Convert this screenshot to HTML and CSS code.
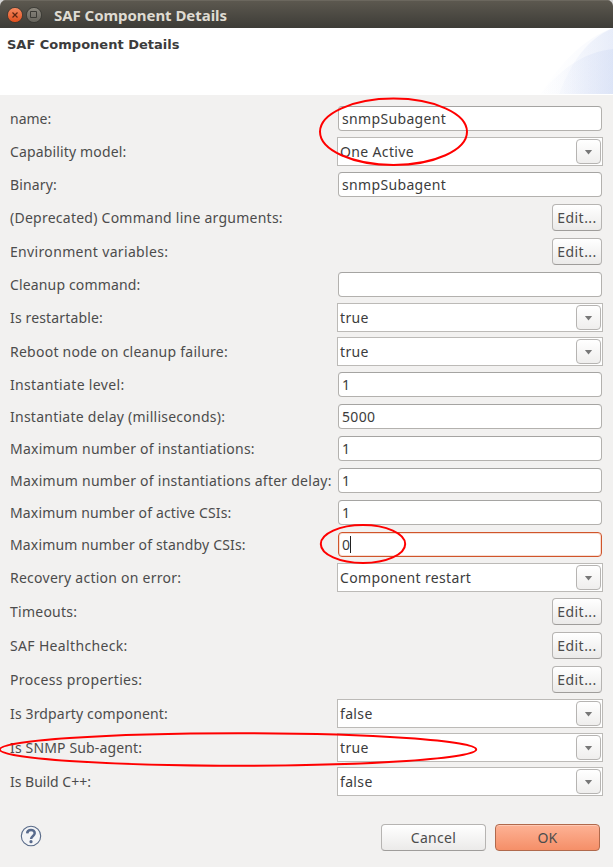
FILE: index.html
```
<!DOCTYPE html>
<html lang="en">
<head>
<meta charset="utf-8">
<title>SAF Component Details</title>
<link rel="stylesheet" href="styles.css">
</head>
<body>
<div class="window">
  <header class="titlebar">
    <svg class="control" viewBox="0 0 16 16"><defs><linearGradient id="close" x2="0" y2="1"><stop stop-color="#f68b62"/><stop offset="1" stop-color="#e04e1c"/></linearGradient></defs><circle cx="8" cy="8" r="7.6" fill="url(#close)" stroke="#34332e" stroke-width=".8"/><path d="M5.5 5.5l5 5M10.5 5.5l-5 5" stroke="#5c2612" stroke-width="1.2"/></svg>
    <svg class="control" viewBox="0 0 16 16"><defs><linearGradient id="max" x2="0" y2="1"><stop stop-color="#8b887f"/><stop offset="1" stop-color="#65635b"/></linearGradient></defs><circle cx="8" cy="8" r="7.6" fill="url(#max)" stroke="#34332e" stroke-width=".8"/><path d="M4.5 4.5h6v6h-6z" fill="none" stroke="#3b3a35"/></svg>
    <span class="caption">SAF Component Details</span>
  </header>
  <section class="banner">
    <h1>SAF Component Details</h1>
    <svg class="arcs" viewBox="0 0 75 66"><defs><linearGradient id="arc" x1="0" x2="75" gradientUnits="userSpaceOnUse"><stop stop-color="#d3ddf5" stop-opacity="0"/><stop offset=".3" stop-color="#d3ddf5" stop-opacity=".12"/><stop offset="1" stop-color="#cdd8f3" stop-opacity=".5"/></linearGradient></defs><path d="M2 66C22 36 46 10 75 0V66z" fill="url(#arc)" opacity=".35"/><path d="M21 66C33 36 47 12 75 0V66z" fill="url(#arc)" opacity=".7"/><path d="M2 66C24 40 46 24 75 21V66z" fill="url(#arc)" opacity=".8"/></svg>
  </section>
  <main class="form">
    <div class="row"><label>name:</label><div class="entry">snmpSubagent</div></div>
    <div class="row tall"><label class="t1">Capability model:</label><div class="combo"><span>One Active</span><i class="drop"></i></div></div>
    <div class="row"><label class="t1">Binary:</label><div class="entry">snmpSubagent</div></div>
    <div class="row tall"><label class="t2">(Deprecated) Command line arguments:</label><button class="edit">Edit...</button></div>
    <div class="row tall"><label class="t3">Environment variables:</label><button class="edit">Edit...</button></div>
    <div class="row"><label class="t1">Cleanup command:</label><div class="entry"></div></div>
    <div class="row tall"><label class="t1">Is restartable:</label><div class="combo"><span>true</span><i class="drop"></i></div></div>
    <div class="row tall"><label class="t2">Reboot node on cleanup failure:</label><div class="combo"><span>true</span><i class="drop"></i></div></div>
    <div class="row"><label class="t3">Instantiate level:</label><div class="entry">1</div></div>
    <div class="row"><label class="t2">Instantiate delay (milliseconds):</label><div class="entry">5000</div></div>
    <div class="row"><label class="t2">Maximum number of instantiations:</label><div class="entry">1</div></div>
    <div class="row"><label class="t2">Maximum number of instantiations after delay:</label><div class="entry">1</div></div>
    <div class="row"><label class="t1">Maximum number of active CSIs:</label><div class="entry">1</div></div>
    <div class="row"><label class="t1">Maximum number of standby CSIs:</label><div class="entry focused">0<i class="caret"></i></div></div>
    <div class="row tall"><label class="t2">Recovery action on error:</label><div class="combo"><span>Component restart</span><i class="drop"></i></div></div>
    <div class="row tall"><label class="t2">Timeouts:</label><button class="edit">Edit...</button></div>
    <div class="row tall"><label class="t3">SAF Healthcheck:</label><button class="edit">Edit...</button></div>
    <div class="row tall"><label class="t3">Process properties:</label><button class="edit">Edit...</button></div>
    <div class="row tall"><label class="t1">Is 3rdparty component:</label><div class="combo"><span>false</span><i class="drop"></i></div></div>
    <div class="row tall"><label class="t1">Is SNMP Sub-agent:</label><div class="combo"><span>true</span><i class="drop"></i></div></div>
    <div class="row tall"><label>Is Build C++:</label><div class="combo"><span>false</span><i class="drop"></i></div></div>
  </main>
  <footer class="actions">
    <svg class="help" viewBox="0 0 22 22"><circle cx="11" cy="11" r="9.7" fill="#f3f4f6" stroke="#586a88" stroke-width="1.1"/><path d="M7.2 8.4C7.3 3.8 14.9 3.9 14.7 8.3C14.6 10.9 11.2 11 11.1 14" fill="none" stroke="#586a8c" stroke-width="2.5"/><circle cx="11" cy="16.7" r="1.6" fill="#586a8c"/></svg>
    <button class="wide">Cancel</button>
    <button class="wide primary">OK</button>
  </footer>
  <svg class="marks" viewBox="0 0 613 867"><ellipse cx="393.5" cy="131.8" rx="73.5" ry="33.2"/><ellipse cx="363" cy="544" rx="42.2" ry="19"/><ellipse cx="238" cy="749.5" rx="238.2" ry="16.2"/></svg>
</div>
</body>
</html>
```
FILE: styles.css
```
* { box-sizing: border-box; }
body { margin: 0; font: 14px/20px "Noto Sans", sans-serif; color: #4c4c4c; background: #d5d5d5; }
.window { position: relative; width: 613px; height: 867px; display: flex; flex-direction: column; background: #f2f1f0; border-radius: 6px 6px 0 0; overflow: hidden; }
.titlebar { height: 28px; display: flex; align-items: center; gap: 3px; padding: 1px 7px 0; background: linear-gradient(#5d5950, #3d3c37); box-shadow: inset 0 1px #6b675e; }
.control { width: 16px; height: 16px; }
.caption { margin-left: 9px; font-size: 15px; font-weight: 700; letter-spacing: -.05px; color: #dfdbd2; }
.banner { height: 67px; display: flex; justify-content: space-between; background: #fff; }
.banner h1 { margin: 7px 0 0 7px; font: 700 13px/20px "DejaVu Sans", sans-serif; color: #3c3c3c; }
.arcs { width: 75px; height: 66px; }
.form { display: flex; flex-direction: column; gap: 5px; padding: 10px 10px 0; }
.row { height: 27px; display: grid; grid-template-columns: 327px 266px; align-items: center; white-space: nowrap; }
.tall { height: 29px; }
.t1 { letter-spacing: .15px; }
.t2 { letter-spacing: .25px; }
.t3 { letter-spacing: .34px; }
.entry { height: 25px; margin: 0 1px; padding: 0 3px; display: flex; align-items: center; background: #fff; border: 1px solid #b3b1ae; border-top-color: #a5a4a2; border-radius: 4px; color: #3c3c3c; letter-spacing: .34px; }
.focused { border-color: #d0552b; box-shadow: inset 0 0 0 1px #f8ddd2; letter-spacing: 0; }
.caret { width: 1px; height: 17px; background: #222; }
.combo { height: 29px; padding: 0 1px 0 2px; display: flex; align-items: center; justify-content: space-between; background: #fff; border: 1px solid #bcbab7; color: #3c3c3c; letter-spacing: .35px; }
.drop { width: 25px; height: 25px; display: grid; place-items: center; border: 1px solid #b6b4b2; border-radius: 4px; background: linear-gradient(#fff, #efeeed); }
.drop::after { content: ""; width: 8px; height: 5px; margin-top: 1px; background: #777; clip-path: polygon(0 0, 100% 0, 50% 100%); }
button { padding: 0; font: inherit; color: #4c4c4c; border: 1px solid #b6b4b2; border-bottom-color: #9f9d9b; border-radius: 4px; background: linear-gradient(#fff, #ebeae9); box-shadow: inset 0 1px #fff; }
.edit { width: 50px; height: 27px; margin-right: 1px; justify-self: end; letter-spacing: .45px; }
.actions { margin-top: 28px; padding: 0 13px 0 20px; display: flex; align-items: flex-start; }
.help { width: 22px; height: 22px; margin: 1px auto 0 0; }
.wide { width: 105px; height: 27px; margin-left: 9px; letter-spacing: .3px; }
.primary { border-color: #b0694c; background: linear-gradient(#fdb295, #f58f68); box-shadow: inset 0 1px #fec9b4; }
.marks { position: absolute; inset: 0; width: 613px; height: 867px; fill: none; stroke: #f00; stroke-width: 2; pointer-events: none; }
```
